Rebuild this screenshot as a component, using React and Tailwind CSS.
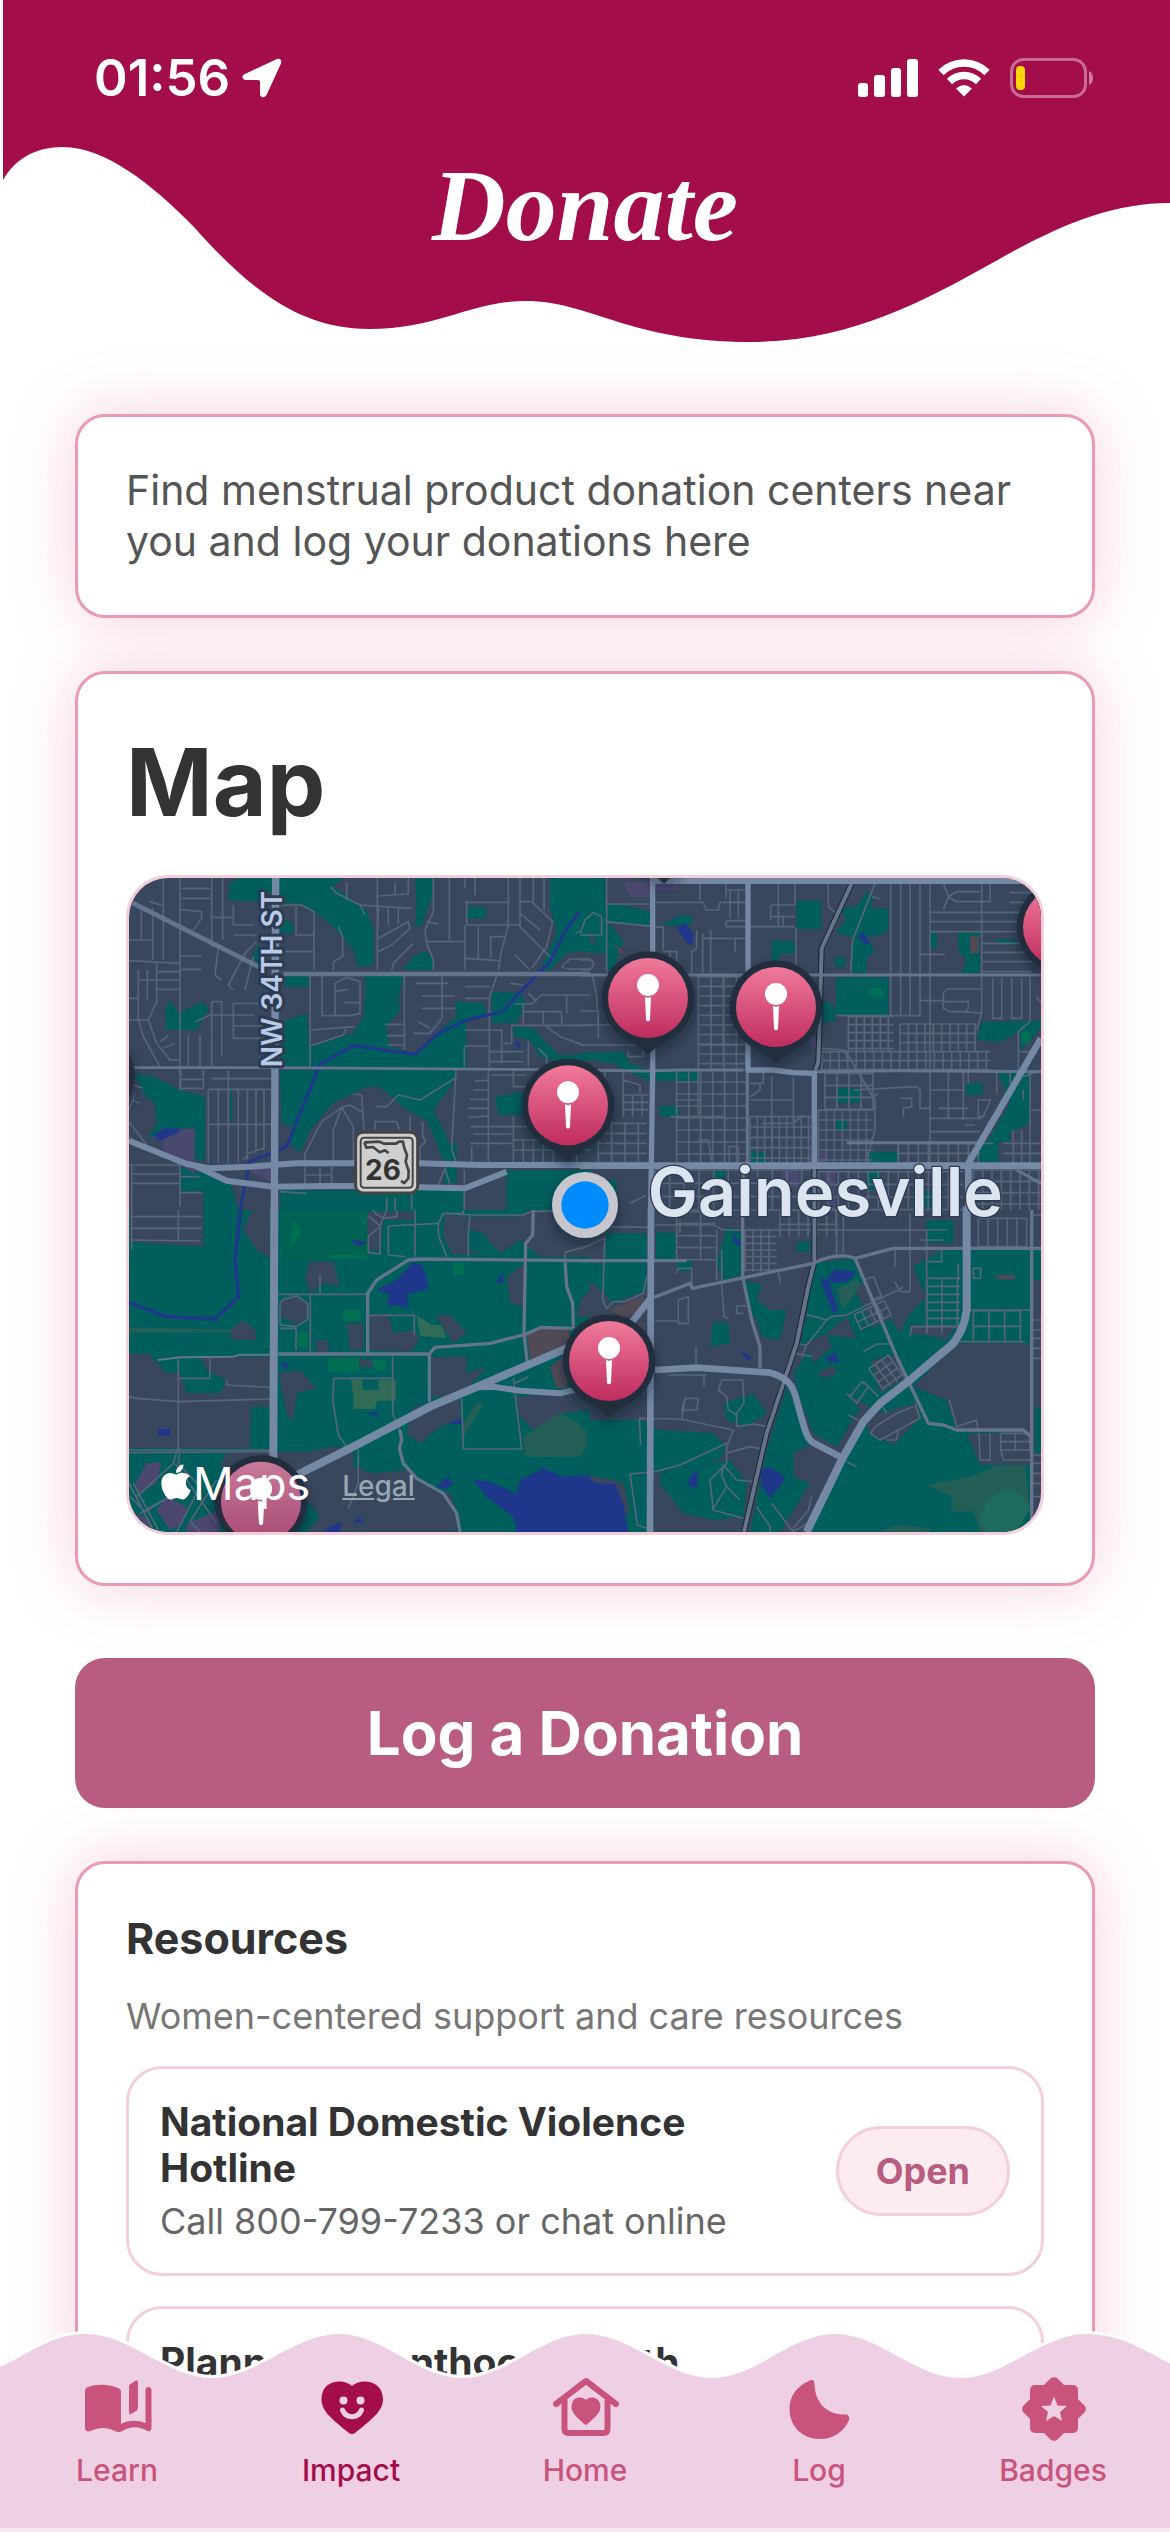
import React from 'react';
import { FaApple } from 'react-icons/fa';

const RESOURCES = [
  { id: 1, name: 'National Domestic Violence Hotline', detail: 'Call 800-799-7233 or chat online' },
  { id: 2, name: 'Planned Parenthood Health' },
];

const PINS = [
  [1605, -153],
  [1557, 360],
  [1941, 387],
  [1317, 682],
  [1440, 1449],
  [396, 1871],
  [2802, 147],
  [-122, 591],
];

const STREET = '#56657a';
const ROAD = '#64748c';
const HIGHWAY = '#7589a4';
const GREEN = '#005e5c';
const LAND = '#38475e';
const WATER = '#1f378a';

// evenly spaced street grid as one path
function grid(x0, y0, x1, y1, dx, dy) {
  let d = '';
  for (let x = x0; x <= x1; x += dx) d += `M${x} ${y0}V${y1}`;
  for (let y = y0; y <= y1; y += dy) d += `M${x0} ${y}H${x1}`;
  return d;
}

function NorthWest() {
  return (
    <g transform="translate(-27 -24)">
      <g fill={GREEN}>
        <path d="M330 40L360 24H670L640 50L700 90L740 120L760 180V285L715 290L700 240L640 170L580 120L530 100H480L460 60L410 95L325 90Z" />
        <path d="M885 24H945L935 80L905 165L885 170L890 100Z M850 300L880 260L910 245L940 260V300Z M480 318H568V350H495Z M480 110L500 150L525 170L515 190H480Z" />
        <path d="M735 318H850L835 390L840 420L800 470L810 530L885 550L950 490L1010 440L1005 395L1090 400L1100 430L1040 450V595H480L485 455L560 430L570 530L700 490L730 440L735 380Z" />
        <path d="M1115 365L1200 370L1215 395L1190 460H1115Z M1290 24H1410V240L1340 250L1290 300H1260L1310 190L1290 110Z M1040 110H1098V145H1040Z" />
        <path d="M480 600H1010L1000 640L940 720L980 800L1000 880L970 870L920 750L860 720L780 650H740L640 700L570 780L540 850L510 820L515 770L485 760Z" />
        <path d="M45 610L100 620L180 660L255 680V870H225V775H130L80 810L110 760L105 700L70 670Z M135 420L150 390L175 430L250 395L265 420L230 480H140Z M395 260L420 220V290Z" />
        <path d="M1180 470L1240 475L1280 520L1320 555H1410V572H1300L1260 560L1230 510L1180 500Z M1125 680L1210 665V735H1135Z" />
        <path d="M180 890L330 930L355 1020H250V965H180Z M480 960H1030V1020H480Z M1160 900H1410V1020H1160Z M330 660H336V760H330Z M985 820H1010V940H970Z" />
      </g>
      <path fill="#4b4870" d="M130 790L225 775V915L130 840Z M385 905L455 875V935Z" />
      <path fill={WATER} d="M100 795L135 775H178V785L120 812Z M1180 520L1200 515V540Z" />
      <path
        stroke={STREET}
        strokeWidth="5"
        d="M130 24V270M180 24V660M185 55H270M185 85H270M275 24V230M308 24V210M275 142H340M340 105V165H400M340 195H410M90 95L130 108M98 115V270M64 115V210M27 210H98M27 272L178 280M55 300V450M82 300V390M110 280V400M110 305H180M110 330H180M110 358H180M55 330H110M27 385H55M55 450L70 500L120 590M27 450H85L110 520L150 570H180M85 450L108 400M120 515L145 497M130 535L165 520M180 258H245M180 298H245M295 230L285 315L305 330M410 215L375 250L325 345L340 360M400 260L375 360M180 118L245 125V145L220 180M340 400V505H460M340 400H430M275 395H305V560M275 395V590M340 468H455M225 455L270 435H400M205 495V590M240 495V590M480 105L545 105L582 125V300M528 110V195H582M495 245H582M632 50L650 70L720 105L735 135M680 35V90M720 105L875 115M772 24V300M772 78L865 72V24M825 40V75M775 115L772 195M805 115V165M835 115V160M775 205L865 155L870 175L815 225L775 245M880 220L820 280L815 300M655 170L668 200V260L640 275V300M940 24V125L915 180L920 220L940 270V300M920 215H1030M920 155L955 162M988 24V210M1035 24V55M1065 24V75M1035 97H1165M1040 100V165H1200M1165 24V165M1200 24V170L1300 270M1200 95H1235L1298 155L1280 230L1235 295M1200 130L1260 180M1165 165L1145 240L1135 300M1112 265V200H1150M1075 170V265M1035 165V300M1035 265L1140 272M1185 255L1230 300M1240 24V95M1272 24V120M570 318V590M606 318V437M606 437H690M645 340L680 322L720 335V430L690 437M645 340V437M645 365L685 358M672 398H720M570 480L705 470M570 528L670 495L680 470M853 318V540M795 463H853M800 497H853M800 525H853M888 340H985M905 378H1005M905 415H1005M966 318V445L930 490H880M895 455L930 475M1130 318L1108 385V590M1035 350H1110M1035 385H1108M1035 480H1145M1035 528H1108M1033 528V590M1170 340L1210 345M1175 466H1410M1175 466V520H1150M1145 480V580M1108 545H1210M1108 575H1210M1210 405V465M1185 402H1235L1265 375H1410M1225 370L1250 395M1270 425V465M1210 425H1325V465M1275 466L1320 500L1390 525H1410M1340 375V430M1255 535L1280 560V580M1225 515V590M182 600V655H250V600M182 628H250M275 626H455M265 658H455M265 658V880M265 763H455M295 660V880M325 600V880M355 660V880M382 660V870M408 660V850M432 660V840M27 755L80 825M40 645L70 655M35 690L60 700M45 670L27 720M555 880V850L605 755L665 712L690 705L732 730M665 712L640 780V880M665 712L700 770V880M700 672L725 675L732 780M768 710H800L835 675L900 690L1005 625M1008 600L995 840L1010 880M765 780V755H830L838 780M870 740V880M908 755V800L918 815L900 830V880M1105 600V740M1065 632H1105M1060 660H1105M1050 688H1105M1045 715H1105M1045 742L1105 738M1050 770H1220M1060 792H1175M1050 820H1175M1105 740V880M1055 830V880M1180 600V650H1220M1110 615H1220M1180 740V880M1180 810H1410M1180 840H1410M1210 810V880M1240 810V880M1270 810V880M1300 810V880M1370 810V880M27 885H180V1010M35 885V1020M35 912H180M35 940H180M180 920H240M180 968H245M555 890V945M600 890V945M635 890V945M555 915H635M975 895L955 945M975 895L990 945M1033 900V1020M370 870L385 850L430 835M800 985V1020M825 985V1020M875 965V1020M480 965L560 970"
      />
      <path stroke={STREET} strokeWidth="4" d="M1365 190L1390 180H1410M1380 150L1395 130H1410M1325 290L1350 267H1410M1325 290L1340 297H1410" />
      <path stroke={WATER} strokeWidth="9" d="M1410 50L1400 70L1405 95L1340 175L1290 275L1145 425L1035 452L955 490L885 553L700 527L600 583L500 830L390 875L360 1020" />
      <path stroke={ROAD} strokeWidth="14" d="M36 98L420 292M490 312H1410" />
      <path stroke={ROAD} strokeWidth="8" d="M27 593H455L1300 599" />
      <path stroke={HIGHWAY} strokeWidth="18" d="M27 812L200 882L270 895L390 890L530 880H900L1080 885H1410M220 885L320 932L460 950L620 948H720L1035 955L1160 905" />
      <path stroke={HIGHWAY} strokeWidth="22" d="M467 24L463 1020" />
    </g>
  );
}

function NorthEast() {
  return (
    <g transform="translate(1353 -24)">
      <g fill={GREEN}>
        <path d="M0 24H75V100L150 110L210 125V165L85 160L130 210L100 300H80V250L0 245V220H50L30 180L0 190Z M245 165L300 135L340 140L325 170Z M650 92H723V177H650Z M575 213H643V250H600L590 300H575Z" />
        <path d="M780 115L830 110L860 65L880 85L870 115L925 115V180L905 195L860 200L885 240L860 265V313H815V200L775 190L770 180L800 150Z M765 262H795V290H765Z" />
        <path d="M1053 185H1070V235H1053Z M1135 187H1200V310H1145L1160 270L1135 240Z M768 322H925V435H768Z M1205 455L1383 452V475L1320 540V485L1260 515L1190 510Z M1250 208H1310V220H1250Z" />
        <path d="M0 548L130 545L150 580L210 600V635L150 605L100 580L0 565Z M228 605H355V633H228Z M240 708H298V740H240Z M768 655H840V698H768Z M1158 640H1208V675H1158Z M768 748H800V782H768Z M725 390L765 410V455H725Z" />
        <path d="M1255 610H1350V760L1290 785V815H1255V880H1210L1180 860L1230 800L1290 700Z M865 845H955V880H865Z M512 840L560 850V880H512Z M400 900H435V950H400Z M860 900H900V960H860Z M1000 960H1060V1020H1000Z M60 930H110V1020H40Z" />
      </g>
      <path fill="#4b4870" d="M125 35H295V60H210V80H150Z M605 900H655V955H605Z M680 850L735 845V880H680Z M735 900H765V1020H735Z M690 500H712V530H690Z" />
      <path fill="#504a55" d="M1170 197H1197V250H1170Z M100 220L145 255L120 250Z" />
      <path fill={WATER} d="M290 175L315 158L340 190V223H325Z M832 200L850 187L868 215L860 225Z" />
      <path fill="#007052" d="M1325 485H1350V520H1325Z M870 355H910V380H870Z" />
      <g stroke={STREET} strokeWidth="5">
        <path d={grid(805, 440, 940, 545, 24, 24)} />
        <path d={grid(960, 462, 1190, 545, 25, 28)} />
        <path d={grid(725, 545, 1230, 600, 26, 27)} />
        <path d={grid(355, 320, 500, 600, 38, 29)} />
        <path d={grid(290, 600, 500, 880, 36, 36)} />
        <path d={grid(510, 740, 700, 880, 22, 31)} />
        <path d={grid(715, 720, 880, 880, 24, 30)} />
        <path d={grid(735, 610, 880, 720, 36, 36)} />
        <path d={grid(955, 820, 1200, 880, 30, 30)} />
        <path d={grid(225, 900, 700, 1020, 44, 40)} />
        <path d={grid(715, 905, 1150, 1020, 30, 38)} />
        <path d={grid(1180, 900, 1383, 1020, 28, 34)} />
        <path d={grid(130, 675, 205, 740, 28, 22)} />
        <path d={grid(55, 760, 200, 880, 40, 30)} />
        <path d="M80 24V310M80 102H215M75 155L250 172V240M0 190L15 150L40 128L65 140V195H0M228 97H370L378 120H415L420 97H500M438 24V85M438 60H500M475 60V145M450 60V145M438 152H500M438 152V170H645M360 24V90M365 205H500M392 180V310M368 190V310M350 180V235L335 245V310M465 205V245M595 24V170M572 105H645V24M572 105V150M575 140H645M610 140V170M648 175V313M745 24V110L765 128M885 40L818 210L812 313M875 80L900 87M932 24V440M962 24V435M990 24V435M1020 24V440M1050 24V880M1050 127H1383M1050 155H1383M1050 185H1383M1090 40L1105 80L1090 120M1105 80L1130 65H1200M1105 80L1130 95H1230V40M1205 24V430L1190 480M1290 68H1383M1290 97H1383M1205 220H1370M1205 247H1370M1205 275H1370M1205 305H1355M1020 253H1095M1020 392H1090M1090 370V415L1110 425H1155L1165 415V395H1090M1090 370L1100 357H1205M1020 437H770M1155 425L1205 430M1238 325V445H1265V325M1295 325V445H1325V325M1350 320V455L1315 485V600M1315 545H1370M1370 380L1383 400M0 423H55V505M38 320L50 380L55 465M0 465H150M0 525H200M145 545V560H190V540M0 270H35L42 285L30 300H0M270 240V310M250 245H290V310M430 320V525M360 525H490M725 535L795 540L880 685L892 670M795 540L805 575M795 540L885 690V780L865 850V880M820 660L1010 650L1020 660V715H1050M960 685H995V710L970 715V740M1050 745H1205M1075 715H1165M1105 605V745M1150 605V750M1165 605V640M1050 660H1150M1195 690H1232L1210 740H1195ZM1155 765H1185M1050 785H1200M1250 605V670M1290 605V640M1330 660V690M1330 620L1383 600M1350 600V880M1350 720H1383M1270 820H1383M1270 850H1383M1300 780V880M1325 780V880M550 600V640H510M540 640V660L510 680M575 620V820M510 690H640M640 620V760L670 735M545 760H640M285 690H360M270 740H430M355 600V740M355 810H385L395 880M448 880V830H475V880M130 600V740M130 630L180 645V670M40 600V720M75 600V700M955 820H1240M955 820V880M150 1000L200 975" />
      </g>
      <path stroke="#1c2433" strokeWidth="18" d="M815 40L725 235L715 575L705 605M703 890V1020" />
      <path stroke={ROAD} strokeWidth="12" d="M815 40L725 235L715 575L705 605M703 890V1020" />
      <path stroke={ROAD} strokeWidth="9" d="M0 315H1383M0 600L200 603L300 600H490M705 605L950 602L1383 605M502 600V890M800 818H1200M490 900V1020M1310 900L1383 940" />
      <path stroke={HIGHWAY} strokeWidth="16" d="M218 24V600L212 1020M504 24V600L580 600L640 608L703 610V885" />
      <path stroke={HIGHWAY} strokeWidth="20" d="M210 32H1383M0 887H1383M1383 505L1165 880V1020" />
    </g>
  );
}

function SouthWest() {
  return (
    <g transform="translate(-27 966)">
      <path fill={GREEN} d="M27 30H1410V996H27Z" />
      <path fill="#006253" d="M480 30H750V175H480Z" />
      <g fill={LAND}>
        <path d="M30 30H250V140L30 125Z M370 90L385 50L400 30H450V175L410 150Z M27 460H85L135 515L180 520L200 580H395L390 745H27Z M240 470H450V620H400L300 580L320 540L260 510Z" />
        <path d="M570 185H640L660 260L610 250L570 280L555 230Z M330 390L370 360L405 390L410 420H335Z M480 305L530 285L565 310V350L530 375L485 350Z M750 345H805L820 400L880 390L900 420L870 455L750 450Z M945 345H990L1040 400L1000 430L965 375Z" />
        <path d="M475 520L540 510L590 565L530 580L520 665L500 640Z M640 470L760 480L800 500H620Z M935 470H1040V520L1100 500L1020 590H935Z M975 45L1045 50L1040 150L1085 160L1000 165L970 110Z" />
        <path d="M1050 50H1200L1230 30H1410V170H1260L1200 120L1140 160L1090 100L1050 90Z M1160 230L1215 190V320L1170 310Z M1380 300L1410 270V350H1370Z M590 420H625V455H590Z M680 370H730V450H690Z" />
        <path d="M320 755H560L640 740L700 745V800L760 820L860 810L940 870L990 880L1010 930V996H560L600 950L560 900V880L300 800Z M880 620L1020 600V660L960 680L900 730L860 700Z M1190 590L1360 580L1410 600V630L1330 640L1240 690L1200 650Z M740 35H880V60H790L780 150H745Z" />
      </g>
      <path fill="#4b4870" d="M45 850L80 790L125 785L110 850L60 880Z M110 930L140 890L200 920L190 970L150 990Z M50 940L90 960L100 996H60Z M200 970L300 930V996H200Z" />
      <path fill="#245f57" d="M1210 710L1320 640L1400 680L1410 770H1215Z M27 382L150 385L330 390V398H27Z M1030 670L1070 610H1092L1030 712Z" />
      <path fill="#316b56" d="M693 538H728V570H775V540H828V602H770L765 627H700V590Z M890 345L935 375H965L980 415L900 408Z" />
      <path fill="#007052" d="M670 330H723V363H670Z M625 475H717V515H625Z M533 400H565V440H533Z M625 165H740V177H625Z M520 60L545 90L510 150Z M745 30L735 80L725 70Z M1000 190H1032V222H1000Z M755 480H798V510H765Z" />
      <path fill="#504a55" d="M1220 400L1270 385H1350L1345 440L1230 480Z M1290 500L1340 460V565H1310Z" />
      <g fill={WATER}>
        <path d="M770 270L830 240L880 185L905 195L920 230L925 265L860 285L868 325L830 315L800 320L810 285Z M1060 840L1110 845L1190 880L1200 840L1270 805L1330 830L1410 825V996H1190L1180 950L1100 890Z" />
        <path d="M688 118L740 125L715 140Z M115 687H150V707H115Z M620 985L665 965L660 996H620Z M700 970L715 948L730 965Z M950 860L980 830L1000 850L980 868Z M980 670L1025 655V673Z M478 490H508L500 508Z M740 640L770 635L772 650Z M1125 245L1155 220L1145 250Z" />
      </g>
      <path
        stroke={STREET}
        strokeWidth="5"
        d="M175 30V120M30 50H245M30 85H245M30 120L242 123M35 30V150M473 283H743M600 225V280M571 285V455M480 310L490 298L530 288L563 310V358L530 380L480 375ZM480 385H528V450M750 346H883V405M805 78L955 70L970 40H1030V30M805 78V165L855 170M885 30V170M955 70V105L980 170M1050 45L1045 100V170M970 40L1060 45H1205L1235 35L1300 32M175 475V745M175 535H270V475M320 540V555L450 562M27 590L50 595L175 605L450 597M27 750H450M27 758L450 755M175 740L160 790L50 890M165 790L290 970M180 745L175 790L240 860L170 996M27 850L100 990M40 850L115 990M30 890L75 935L180 870M60 940L130 900M290 840L210 965L240 996M642 535H820M642 535L638 600L655 705L680 740M818 470V640L840 690M715 750V850L685 925M1025 595L1030 747H1205L1180 535M1225 530L1185 550M748 50L780 78L800 30M830 30V50L790 55L765 40L750 12M780 78V162L745 158V110L780 78M1335 180V157L1410 135"
      />
      <path stroke={WATER} strokeWidth="10" d="M362 30L345 175L355 290L285 357L140 350L27 307" />
      <path stroke={ROAD} strokeWidth="6" d="M113 480L180 472L340 470L360 464H450" />
      <path stroke={ROAD} strokeWidth="10" d="M475 462H928L945 442L1110 430L1210 405L1265 382L1360 385M928 462V605M743 460V280L770 240L865 180L900 177L1410 182M1240 20L1238 105L1217 130L1212 400L1222 490M1335 180L1340 260L1358 310L1360 385M840 690L845 720L838 745L850 790L890 835L970 880L1010 940L1020 996" />
      <path stroke={HIGHWAY} strokeWidth="24" d="M463 20L460 780M530 825L690 745L930 620L1060 565L1380 428" />
      <path stroke={HIGHWAY} strokeWidth="18" d="M1070 562L1120 560L1200 572L1320 580L1380 565" />
    </g>
  );
}

function SouthEast() {
  return (
    <g transform="translate(1353 966)">
      <g fill={GREEN}>
        <path d="M75 100H200V270L100 310L40 250L0 240V190H75Z M228 95L290 100V180H228Z M440 80L485 95V225L430 240L410 190Z M490 240L545 255L530 300L570 330H620L600 420L545 410L530 360L500 320Z M400 365L445 370L450 430L390 440Z M285 182H335V215H300Z M650 130L690 120V155H650Z" />
        <path d="M700 190L820 175L870 260L960 400L990 340L1040 290L1000 200L1085 150H1150V330H1350V430H1140L1080 480L1000 560L1100 600L1130 690L1350 700V996H690L790 780L860 650L800 620L840 540L870 490L830 420L800 350L740 400L660 440L680 340L690 260Z" />
        <path d="M620 560L660 640L700 730L640 760V830L690 850L600 996H510L560 750ZM640 520L720 400L850 420L880 500L830 640L770 740L700 700L660 600Z M1170 150H1350V328H1170Z M1355 150H1383V240H1355Z M1365 620H1383V760H1365Z M1040 60H1120V130H1040Z" />
        <path d="M0 660H180L240 690L400 700L440 740L420 780L330 800L220 820V996H100L150 930L130 850L100 840L0 820Z M240 820L330 800L450 780L500 850L490 950L400 960L310 940L240 850Z M430 610L520 580L560 640L500 680L440 660Z" />
      </g>
      <path fill={LAND} d="M820 590L900 640L1010 610L1020 655L940 735L870 700Z M875 480L950 465L985 530L900 580Z M1160 700H1350V795H1200Z M1105 600L1140 660L1190 665V690H1130Z M820 260L880 230L930 360L880 380Z M990 375H1130L1100 420L1070 410L990 400Z M680 430L740 400L755 440L700 490Z M710 520L760 495L770 520L740 535Z M228 300H330V370H228Z" />
      <path fill="#245f57" d="M1040 855L1170 830L1250 797H1335L1350 930L1300 996H1200L1180 935H1115V890Z M0 680L20 690V740L0 775Z M770 270L830 235L840 260L790 330Z M905 990L960 975L1050 985V996H905Z" />
      <path fill="#1d6b5e" d="M1220 900L1280 865L1320 885L1350 920L1320 980L1280 996H1220L1195 965Z" />
      <path fill="#504a55" d="M85 330L190 290L205 330L130 350Z M1250 225H1305V238H1250Z M150 370L195 370V400Z" />
      <path fill={WATER} d="M0 820L50 850L105 850L130 910L145 996H0Z M740 230L770 208L830 215L800 245L755 250Z M720 235L745 240L775 330L760 340L740 290Z M540 805L575 803L618 835L570 895L545 860Z M355 810L350 865L322 855L330 830Z M735 480L765 455L778 490Z M460 100L482 130L475 140L460 120Z M478 448L518 475L500 480Z" />
      <g stroke={STREET} strokeWidth="5">
        <path d={grid(1040, 235, 1140, 400, 46, 24)} />
        <path d={grid(1180, 332, 1325, 425, 47, 47)} />
        <path d={grid(1195, 55, 1340, 140, 29, 85)} />
        <path d={grid(495, 90, 590, 215, 24, 20)} />
        <path d={grid(290, 35, 405, 180, 72, 36)} />
        <path d={grid(600, 30, 770, 110, 28, 43)} />
        <path d={grid(1262, 700, 1350, 750, 44, 25)} />
        <path transform="rotate(-35 915 515)" d={grid(880, 480, 955, 560, 24, 24)} />
        <path transform="rotate(-25 880 350)" d={grid(830, 320, 930, 370, 25, 24)} />
        <path d="M75 110L68 300L80 325L100 305M0 148L75 115M0 80H75V30M100 305H135L190 280L200 230M75 80L215 82M225 75H400L430 90H1100M410 90V240M425 150V240M425 255L432 350L445 355M290 220L295 205H335V260M295 300L325 290V370H295ZM225 363H295M500 318H470V340H490M348 440V500M265 525H380M372 525V560M315 595H355L350 630H305ZM178 655L300 657L460 690M178 655L182 735M460 690L440 740V790L390 840L400 930L490 955M440 730L300 795L225 815L150 822L172 975L200 985M430 795L470 840L520 845M430 795L425 825L440 860L400 925M440 860L480 900M435 760L510 740L545 747M470 680L520 672L565 680M425 540H488L492 610L470 640V680M425 540L415 570L440 590L445 630L470 645M595 215L602 250M680 343L740 360L755 350L800 345L970 262M740 360L680 435L648 432M680 435L665 470M648 460L695 470M850 240L880 230L905 290L870 300M945 245L960 275H990V40M850 455L890 432H930M800 580L830 610L865 560L845 545L810 590M850 545L895 590M895 600L920 640M1005 610L1020 655L900 720L872 700L885 680L950 640L1000 620M955 685L950 720H920M805 645L835 660M685 970L635 996M695 890L685 930L635 990L575 910M530 920L570 980V996M800 785L830 800M1108 600L1130 680L1190 660L1195 695M1197 700L1200 780H1230V700M1262 750L1270 780H1350M1130 425H1335M990 410L995 380H1140M1180 205H1202V235H1180ZM1170 330H1350M945 150V200M1040 90V400M1085 150V185H1040M1020 120H1090M1135 190V240M1357 360H1383M1357 390H1383M1357 415H1383M1357 445H1383M1357 475H1383M1357 765H1383M1357 790H1383M1357 820H1383M1357 850H1383M1357 890H1383M1357 45H1383M305 660L315 595M770 30V165M790 30V160M300 60V100" />
      </g>
      <path stroke="#1c2433" strokeWidth="18" d="M703 30V185L685 260L650 430L560 700L492 996" />
      <path stroke={ROAD} strokeWidth="12" d="M703 30V185L685 260L650 430L560 700L492 996" />
      <path stroke={ROAD} strokeWidth="10" d="M222 292L330 250L337 265L495 232L700 190C740 170 790 160 825 175L940 145H1383M0 182H320M825 175L950 470L1045 670L1090 675L1130 690H1330L1355 712M1355 30V996M488 40V230L515 360L540 440V505" />
      <path stroke={HIGHWAY} strokeWidth="20" d="M213 20L210 996M225 510L350 503L570 518C640 535 645 580 655 620C675 690 680 718 700 728L790 775M90 450L212 295" />
      <path stroke={HIGHWAY} strokeWidth="24" d="M1160 20V330C1155 375 1140 400 1120 430L990 540L900 610L850 665L790 770L680 996" />
    </g>
  );
}

function Pin({ x, y }) {
  return (
    <g transform={`translate(${x} ${y})`}>
      <path d="M0 -140a140 140 0 0 1 60 266C35 140 20 150 0 171C-20 150 -35 140 -60 126A140 140 0 0 1 0 -140Z" fill="#232d3d" filter="url(#pinShadow)" />
      <circle r="120" fill="url(#pinFill)" />
      <circle cy="-39" r="33" fill="#fff" />
      <path d="M-9 -3Q0 2 9 -3L6 66Q0 74 -6 66Z" fill="#fff" />
    </g>
  );
}

function CityMap() {
  return (
    <svg viewBox="0 0 2736 1962" preserveAspectRatio="xMidYMid slice" className="block w-full h-full" fill="none" strokeLinejoin="round" role="img" aria-label="Donation centers in Gainesville">
      <defs>
        <linearGradient id="pinFill" x1="0" y1="0" x2="0" y2="1">
          <stop offset="0" stopColor="#f07a9a" />
          <stop offset="1" stopColor="#bf2c5f" />
        </linearGradient>
        <filter id="pinShadow" x="-30%" y="-30%" width="160%" height="170%">
          <feDropShadow dx="0" dy="18" stdDeviation="18" floodColor="#0b1420" floodOpacity="0.45" />
        </filter>
      </defs>
      <rect width="2736" height="1962" fill={LAND} />
      <SouthWest />
      <SouthEast />
      <NorthWest />
      <NorthEast />

      {/* Route shield */}
      <g transform="translate(676 759)">
        <rect x="4" y="4" width="186" height="182" rx="22" fill="#cfcfcf" stroke="#444" strokeWidth="9" />
        <rect x="19" y="20" width="156" height="150" rx="10" stroke="#444" strokeWidth="6" />
        <path d="M30 34L75 32L90 38H125L135 32H146L150 52L158 72L154 92L163 120L162 142L150 156L140 150M30 34L36 50L56 48L76 64L92 58L103 66" stroke="#444" strokeWidth="8" />
        <text x="86" y="147" textAnchor="middle" fontSize="84" className="font-['Inter',sans-serif] font-bold" fill="#333">26</text>
      </g>

      <text transform="translate(460 568) rotate(-90)" fontSize="84" className="font-['Inter',sans-serif] font-semibold" fill="#b9cae6" stroke="#2c3b52" strokeWidth="18" paintOrder="stroke">
        NW 34TH ST
      </text>

      {PINS.map(([x, y]) => (
        <Pin key={`${x}:${y}`} x={x} y={y} />
      ))}

      {/* Faded while it sits under the attribution */}
      <circle cx="396" cy="1871" r="120" fill="#8a7896" fillOpacity="0.4" />
      <g transform="translate(396 1871)" fill="#fff">
        <circle cy="-39" r="33" />
        <path d="M-9 -3Q0 2 9 -3L6 66Q0 74 -6 66Z" />
      </g>

      {/* Current location */}
      <circle cx="1368" cy="981" r="99" fill="#c6c6cc" filter="url(#pinShadow)" />
      <circle cx="1368" cy="981" r="71" fill="#008cff" />

      <text x="1556" y="1013" fontSize="201" className="font-['Inter',sans-serif] font-semibold" fill="#dbe4ef" stroke="#2c3b52" strokeWidth="8" paintOrder="stroke">
        Gainesville
      </text>
    </svg>
  );
}

function StatusBar() {
  return (
    <div className="h-[156px] pl-[94px] pr-[76px] flex items-center justify-between text-white">
      <div className="flex items-center gap-3">
        <span className="text-[51px] leading-[60px] font-semibold">01:56</span>
        <svg viewBox="0 0 40 40" className="w-10 h-10" fill="currentColor">
          <path d="M35 1C38 0 40 2 39 5.500L25 36C23 40.500 18 40 18 36V24Q18 22 16 22H4C0 22-1 17.500 3 16Z" />
        </svg>
      </div>
      <div className="flex items-center gap-5">
        <svg viewBox="0 0 60 38" className="w-[60px] h-[38px]" fill="currentColor">
          <rect x="0" y="24" width="10" height="14" rx="3" />
          <rect x="16" y="16" width="11" height="22" rx="3" />
          <rect x="33" y="9" width="10" height="29" rx="3" />
          <rect x="49" y="0" width="11" height="38" rx="3" />
        </svg>
        <svg viewBox="0 0 52 38" className="w-[52px] h-[38px]" fill="none" stroke="currentColor">
          <path d="M3 13.500C16 .800 36 .800 49 13.500" strokeWidth="7.500" />
          <path d="M11.500 22.500C20 14.500 32 14.500 40.500 22.500" strokeWidth="7.500" />
          <path d="M18 29.500Q26 22.500 34 29.500L26 37.500Z" fill="currentColor" stroke="none" />
        </svg>
        <svg viewBox="0 0 84 40" className="w-[84px] h-10" fill="none">
          <rect x="1.500" y="1.500" width="74" height="37" rx="12" stroke="#fff" strokeOpacity="0.4" strokeWidth="3" />
          <path d="M79 13Q83 15 83 20T79 27Z" fill="#fff" fillOpacity="0.45" />
          <rect x="6" y="8" width="9" height="24" rx="4" fill="#ffd60a" />
        </svg>
      </div>
    </div>
  );
}

function Header() {
  return (
    <header className="relative h-[344px] shrink-0">
      <svg viewBox="0 0 1170 344" preserveAspectRatio="none" className="absolute inset-0 w-full h-full" fill="#a30d4a">
        <path d="M3 0V180C16 158 36 147 63 147C105 147 152 184 194 227C250 290 300 329 369 329C440 329 470 301 526 301C590 301 630 342 750 342C850 342 925 300 985 267C1050 230 1105 203 1170 203V0Z" />
      </svg>
      <div className="relative">
        <StatusBar />
        <h1 className="text-center text-white text-[102px] leading-[100px] font-bold italic font-['Liberation_Serif',serif]">Donate</h1>
      </div>
    </header>
  );
}

function Card({ children, className = '' }) {
  return (
    <section className={`bg-white rounded-[30px] border-[3px] border-[#e99ab5] p-12 shadow-[0_0_60px_rgba(232,140,170,0.4)] ${className}`}>
      {children}
    </section>
  );
}

function ResourceRow({ resource }) {
  return (
    <li className="flex items-center justify-between gap-6 rounded-[36px] border-[3px] border-[#f3cfdb] px-[31px] py-[30px]">
      <div className="w-[600px]">
        <h3 className="text-[39px] leading-[46px] font-bold text-[#333]">{resource.name}</h3>
        {resource.detail && <p className="mt-2 text-[36px] leading-[44px] text-[#666]">{resource.detail}</p>}
      </div>
      {resource.detail && (
        <button type="button" className="h-[90px] px-[37px] rounded-full border-[3px] border-[#f3cfdb] bg-[#fcebef] text-[36px] font-bold text-[#b85c82]">
          Open
        </button>
      )}
    </li>
  );
}

const HEART = 'M37 13C44 6 67 5 68 26C68 37 60 44 40 60Q37 62 34 60C14 44 6.500 37 6.500 26C7 5 30 6 37 13Z';

const TABS = [
  {
    label: 'Learn',
    icon: (
      <>
        <path d="M4 18C4 16 5 15 7 14C15 11 27 11 37 15Q40 16 40 19V51C48 47 56 47 64.500 50V17C64.500 13 70.500 13 70.500 17V55C70.500 57 68.500 59 66.500 58C57.500 53 49.500 53 41.500 58Q37.500 60 34 58C26 54 18 54 9.500 58C6.500 59 4 58 4 55Z" />
        <path d="M48 14Q48 11 51 10L54 8Q57 6 57 10V34Q57 37 55 38L50 41Q48 42 48 39Z" />
      </>
    ),
  },
  {
    label: 'Impact',
    active: true,
    icon: (
      <>
        <path d={HEART} />
        <circle cx="28.500" cy="27.500" r="4" fill="#efcfe3" />
        <circle cx="45.500" cy="27.500" r="4" fill="#efcfe3" />
        <path d="M27.500 37C31 46 43 46 46.500 37" fill="none" stroke="#efcfe3" strokeWidth="5" strokeLinecap="round" />
      </>
    ),
  },
  {
    label: 'Home',
    icon: (
      <>
        <path d="M7 31L37 8L67 31M15.500 28V56Q15.500 60 19.500 60H54.500Q58.500 60 58.500 56V28" fill="none" stroke="currentColor" strokeWidth="6" strokeLinecap="round" strokeLinejoin="round" />
        <path transform="translate(19.500 20) scale(.47 .52)" d={HEART} />
      </>
    ),
  },
  {
    label: 'Log',
    icon: <path d="M26 8C29 6 31.500 7 31.500 11C32 30 44 41 60 41.500C65 41 67 43 66 47C61 59 50 66 37 66C19 66 6.500 53 6.500 36C6.500 23 14 13 26 8Z" />,
  },
  {
    label: 'Badges',
    icon: (
      <>
        <rect x="13" y="12" width="48" height="48" rx="5" />
        <rect x="13" y="12" width="48" height="48" rx="5" transform="rotate(45 37 36)" />
        <path d="M37 23.500L40.500 32.500L50 33L43 39L45 48L37 43L29 48L31 39L24 33L33.500 32.500Z" fill="#efcfe3" />
      </>
    ),
  },
];

function BottomNav() {
  return (
    <nav className="relative shrink-0 -mt-[54px] pt-[45px] pb-11">
      <svg viewBox="0 0 1170 204" preserveAspectRatio="none" className="absolute inset-0 w-full h-full" fill="#efcfe3">
        <path
          d="M-6 42C30 26 50 6 86 6C131 6 167 50 212 50S294 6 339 6S417 50 462 50S541 6 586 6S667 50 712 50S790 6 835 6S915 50 960 50S1042 6 1087 6C1120 6 1145 22 1176 39V210H-6Z"
          stroke="#fff"
          strokeWidth="6"
          paintOrder="stroke"
        />
        <rect y="200" width="1170" height="4" fill="#f8e8f2" />
      </svg>
      <ul className="relative grid grid-cols-5">
        {TABS.map((tab) => (
          <li key={tab.label}>
            <a href={`#${tab.label.toLowerCase()}`} className={`flex flex-col items-center gap-[7px] ${tab.active ? 'text-[#a30d4a]' : 'text-[#c8547e]'}`}>
              <svg viewBox="0 0 72 72" className="w-[72px] h-[72px]" fill="currentColor">
                {tab.icon}
              </svg>
              <span className="text-[30px] leading-9 font-medium">{tab.label}</span>
            </a>
          </li>
        ))}
      </ul>
    </nav>
  );
}

export default function App() {
  return (
    <div className="h-screen flex flex-col overflow-hidden bg-white font-['Inter',sans-serif]">
      <Header />
      <main className="flex-1 min-h-0 overflow-y-auto [scrollbar-width:none] px-[75px] pt-[70px] pb-[100px]">
        <Card>
          <p className="text-[41px] leading-[51px] text-[#555]">Find menstrual product donation centers near you and log your donations here</p>
        </Card>

        <Card className="mt-[53px]">
          <h2 className="text-[93px] leading-[120px] font-bold text-[#333]">Map</h2>
          <div className="relative mt-[33px] aspect-[918/660] rounded-[42px] border-[3px] border-[#f3cfdb] overflow-hidden">
            <CityMap />
            <div className="absolute left-[30px] bottom-[22px] flex items-center text-white">
              <FaApple className="w-[34px] h-10 mb-1" />
              <span className="text-[45px] leading-[52px]">Maps</span>
              <a href="#legal" className="ml-8 mt-1 text-[28px] leading-9 underline font-medium text-[#98a8b0]">Legal</a>
            </div>
          </div>
        </Card>

        <button type="button" className="mt-[72px] w-full h-[150px] rounded-[30px] bg-[#b85c82] text-white text-[60px] font-bold">
          Log a Donation
        </button>

        <Card className="mt-[53px]">
          <h2 className="text-[43px] leading-[52px] font-bold text-[#333]">Resources</h2>
          <p className="mt-[30px] text-[36px] leading-[44px] text-[#777]">Women-centered support and care resources</p>
          <ul className="mt-7 flex flex-col gap-[30px]">
            {RESOURCES.map((resource) => (
              <ResourceRow key={resource.id} resource={resource} />
            ))}
          </ul>
        </Card>
      </main>
      <BottomNav />
    </div>
  );
}
